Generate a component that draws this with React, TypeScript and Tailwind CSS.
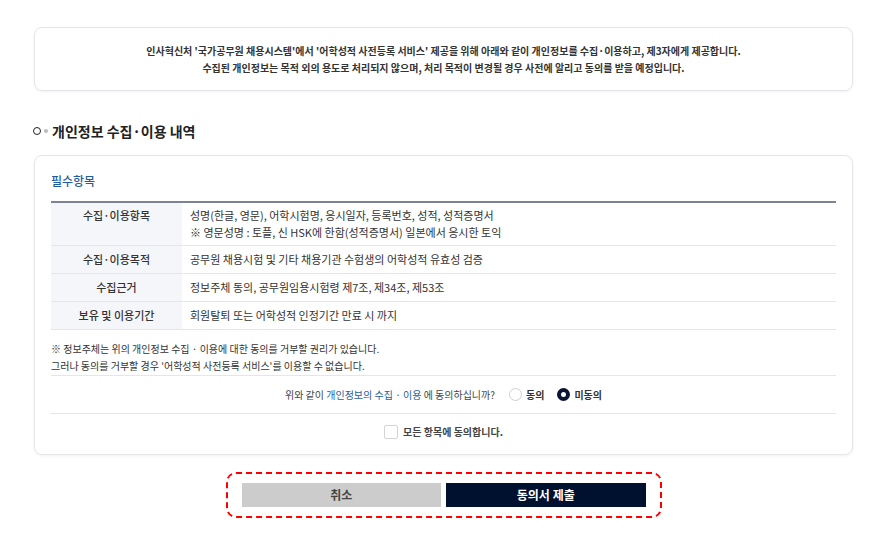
import { useState } from 'react';

const rows: { label: string; value: string[] }[] = [
  { label: '수집·이용항목', value: ['성명(한글, 영문), 어학시험명, 응시일자, 등록번호, 성적, 성적증명서', '※ 영문성명 : 토플, 신 HSK에 한함(성적증명서) 일본에서 응시한 토익'] },
  { label: '수집·이용목적', value: ['공무원 채용시험 및 기타 채용기관 수험생의 어학성적 유효성 검증'] },
  { label: '수집근거', value: ['정보주체 동의, 공무원임용시험령 제7조, 제34조, 제53조'] },
  { label: '보유 및 이용기간', value: ['회원탈퇴 또는 어학성적 인정기간 만료 시 까지'] },
];

export default function App() {
  const [agree, setAgree] = useState<'y' | 'n'>('n');
  const [all, setAll] = useState(false);

  return (
    <div className="min-h-[542px] w-[887px] bg-white text-[#333]" style={{ fontFamily: '"Noto Sans CJK KR", "Noto Sans", sans-serif' }}>
      <div className="px-[34px] pt-[27px]">
        {/* notice */}
        <div className="flex h-[64px] flex-col items-center justify-center rounded-lg border border-[#e6e6ea] text-[10px] font-semibold leading-[17px] text-[#333] shadow-[0_1px_3px_rgba(0,0,0,0.06)]">
          <p>인사혁신처 '국가공무원 채용시스템'에서 '어학성적 사전등록 서비스' 제공을 위해 아래와 같이 개인정보를 수집·이용하고, 제3자에게 제공합니다.</p>
          <p>수집된 개인정보는 목적 외의 용도로 처리되지 않으며, 처리 목적이 변경될 경우 사전에 알리고 동의를 받을 예정입니다.</p>
        </div>

        {/* heading */}
        <div className="mt-[30px] flex h-[20px] items-center">
          <span className="-ml-[1px] h-[8px] w-[8px] rounded-full border-[1.5px] border-[#222]" />
          <span className="ml-[3px] h-[4px] w-[4px] rounded-full bg-[#bbb]" />
          <h2 className="ml-[4px] text-[14px] font-bold text-[#222]">개인정보 수집·이용 내역</h2>
        </div>

        {/* card */}
        <div className="mt-[14px] rounded-lg border border-[#e6e6ea] px-[16px] pb-[15px] pt-[16px] shadow-[0_1px_3px_rgba(0,0,0,0.06)]">
          <p className="text-[12px] font-medium text-[#1f5d9c]">필수항목</p>
          <table className="mt-[11px] w-full border-t-2 border-[#7c8394] text-[11px] leading-[17px]">
            <tbody>
              {rows.map((r) => {
                const pad = r.value.length > 1 ? 'py-[4px]' : 'py-[5px]';
                return (
                  <tr key={r.label} className="border-b border-[#e4e6ea]">
                    <td className={`w-[131px] bg-[#f4f6fa] text-center align-top font-medium ${pad}`}>{r.label}</td>
                    <td className={`px-[8px] ${pad}`}>
                      {r.value.map((v) => <p key={v}>{v}</p>)}
                    </td>
                  </tr>
                );
              })}
            </tbody>
          </table>
          <div className="border-b border-[#e4e6ea] pb-[1px] pt-[10px] text-[10px] leading-[17px]">
            <p>※ 정보주체는 위의 개인정보 수집 · 이용에 대한 동의를 거부할 권리가 있습니다.</p>
            <p>그러나 동의를 거부할 경우 '어학성적 사전등록 서비스'를 이용할 수 없습니다.</p>
          </div>
          <div className="flex h-[38px] items-center justify-center border-b border-[#e4e6ea] text-[10px]">
            <span className="text-[#444]">위와 같이 <span className="text-[#1f5d9c]">개인정보의 수집 · 이용</span> 에 동의하십니까?</span>
            <label className="ml-[14px] flex cursor-pointer items-center gap-[4px] font-bold" onClick={() => setAgree('y')}>
              <span className={`h-[13px] w-[13px] rounded-full ${agree === 'y' ? 'border-4 border-[#0b1533]' : 'border border-[#cfcfcf] bg-white'}`} />
              동의
            </label>
            <label className="ml-[13px] flex cursor-pointer items-center gap-[4px] font-bold" onClick={() => setAgree('n')}>
              <span className={`h-[13px] w-[13px] rounded-full ${agree === 'n' ? 'border-4 border-[#0b1533]' : 'border border-[#cfcfcf] bg-white'}`} />
              미동의
            </label>
          </div>
          <label className="mt-[10px] flex cursor-pointer items-center justify-center gap-[5px] text-[10px] font-bold text-[#444]" onClick={() => setAll(!all)}>
            <span className={`flex h-[14px] w-[14px] items-center justify-center rounded-[2px] border ${all ? 'border-[#0b1533] bg-[#0b1533] text-white' : 'border-[#d4d4d4] bg-white'}`}>{all ? '✓' : ''}</span>
            모든 항목에 동의합니다.
          </label>
        </div>

        {/* buttons */}
        <div className="mt-[17px] flex justify-center">
          <div className="flex w-[436px] gap-[5px] rounded-[10px] border-2 border-dashed border-[#ff0000] px-[14px] py-[9px]">
            <button className="h-[24px] flex-1 bg-[#cccccc] text-[12px] font-bold text-[#444]">취소</button>
            <button className="h-[24px] flex-1 bg-[#00112f] text-[12px] font-bold text-white">동의서 제출</button>
          </div>
        </div>
      </div>
    </div>
  );
}
